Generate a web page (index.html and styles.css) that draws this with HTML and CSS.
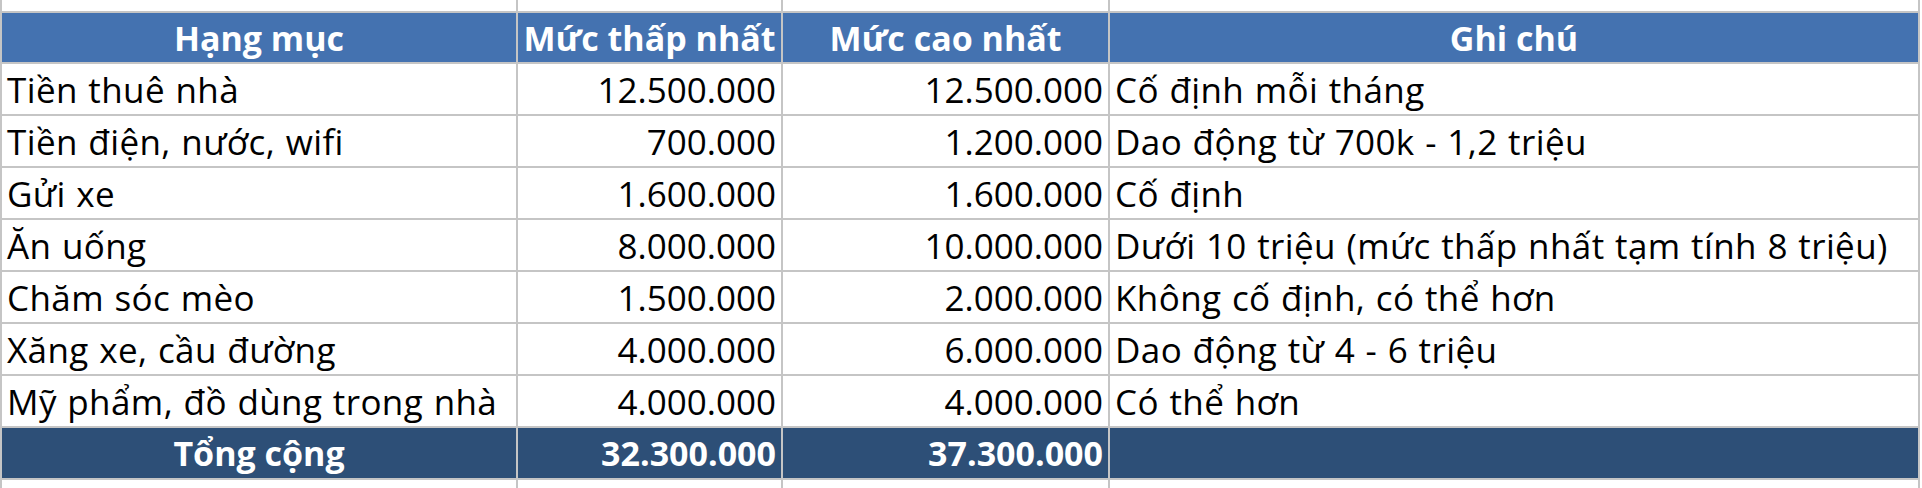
FILE: index.html
```html
<!DOCTYPE html>
<html lang="vi">
<head>
<meta charset="utf-8">
<title>Chi phí</title>
<link rel="stylesheet" href="styles.css">
</head>
<body>
<div class="sheet">
  <div class="cell blank top"></div><div class="cell blank top"></div><div class="cell blank top"></div><div class="cell blank top"></div>

  <div class="cell head">Hạng mục</div>
  <div class="cell head">Mức thấp nhất</div>
  <div class="cell head">Mức cao nhất</div>
  <div class="cell head">Ghi chú</div>

  <div class="cell">Tiền thuê nhà</div>
  <div class="cell num">12.500.000</div>
  <div class="cell num">12.500.000</div>
  <div class="cell">Cố định mỗi tháng</div>

  <div class="cell">Tiền điện, nước, wifi</div>
  <div class="cell num">700.000</div>
  <div class="cell num">1.200.000</div>
  <div class="cell">Dao động từ 700k - 1,2 triệu</div>

  <div class="cell">Gửi xe</div>
  <div class="cell num">1.600.000</div>
  <div class="cell num">1.600.000</div>
  <div class="cell">Cố định</div>

  <div class="cell">Ăn uống</div>
  <div class="cell num">8.000.000</div>
  <div class="cell num">10.000.000</div>
  <div class="cell">Dưới 10 triệu (mức thấp nhất tạm tính 8 triệu)</div>

  <div class="cell">Chăm sóc mèo</div>
  <div class="cell num">1.500.000</div>
  <div class="cell num">2.000.000</div>
  <div class="cell">Không cố định, có thể hơn</div>

  <div class="cell">Xăng xe, cầu đường</div>
  <div class="cell num">4.000.000</div>
  <div class="cell num">6.000.000</div>
  <div class="cell">Dao động từ 4 - 6 triệu</div>

  <div class="cell">Mỹ phẩm, đồ dùng trong nhà</div>
  <div class="cell num">4.000.000</div>
  <div class="cell num">4.000.000</div>
  <div class="cell">Có thể hơn</div>

  <div class="cell total center">Tổng cộng</div>
  <div class="cell total num">32.300.000</div>
  <div class="cell total num">37.300.000</div>
  <div class="cell total"></div>

  <div class="cell blank bottom"></div><div class="cell blank bottom"></div><div class="cell blank bottom"></div><div class="cell blank bottom"></div>
</div>
</body>
</html>
```

FILE: styles.css
```css
html, body {
  margin: 0;
  padding: 0;
  background: #ffffff;
}

.sheet {
  width: 1920px;
  box-sizing: border-box;
  display: grid;
  grid-template-columns: 514px 263px 325px 808px;
  grid-template-rows: 11px 49px repeat(8, 50px) 8px;
  gap: 2px;
  padding: 0 2px;
  background: #c5c5c5;
  font-family: "Open Sans", "Noto Sans", sans-serif;
  font-size: 35px;
  letter-spacing: 0.4px;
  word-spacing: 1px;
  color: #000000;
}

.cell {
  background: #ffffff;
  display: flex;
  align-items: center;
  padding: 0 5px;
  white-space: nowrap;
  overflow: visible;
  line-height: 1;
}

.blank {
  padding: 0;
}

.head {
  background: #4472b0;
  color: #ffffff;
  font-weight: 700;
  font-size: 34px;
  letter-spacing: 0;
  word-spacing: 0;
  justify-content: center;
}

.num {
  justify-content: flex-end;
  letter-spacing: 0;
}

.total {
  background: #2d4f77;
  color: #ffffff;
  font-weight: 700;
  font-size: 34px;
  letter-spacing: 0;
  word-spacing: 0;
}

.center {
  justify-content: center;
}
```
